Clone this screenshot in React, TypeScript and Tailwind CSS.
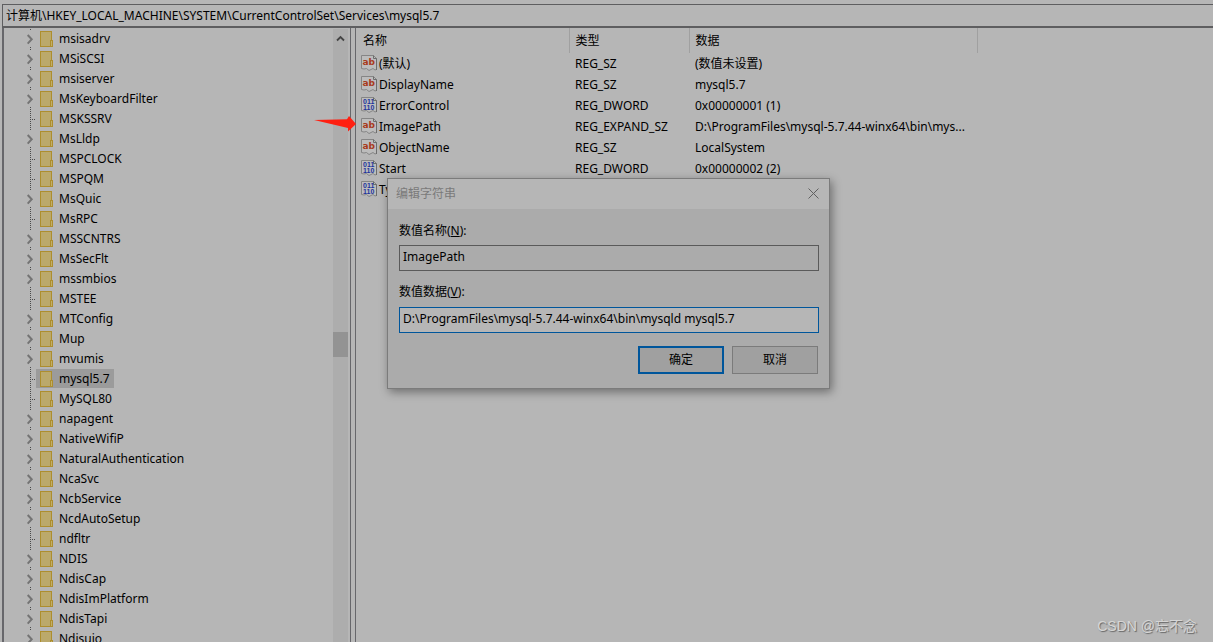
import { useState } from 'react';
import clsx from 'clsx';

type ValueKind = 'string' | 'binary';

interface RegistryValue {
  name: string;
  kind: ValueKind;
  type: string;
  data: string;
}

interface RegistryKey {
  name: string;
  leaf?: boolean;
}

const keys: RegistryKey[] = [
  { name: 'msisadrv' },
  { name: 'MSiSCSI' },
  { name: 'msiserver' },
  { name: 'MsKeyboardFilter' },
  { name: 'MSKSSRV', leaf: true },
  { name: 'MsLldp' },
  { name: 'MSPCLOCK', leaf: true },
  { name: 'MSPQM', leaf: true },
  { name: 'MsQuic' },
  { name: 'MsRPC', leaf: true },
  { name: 'MSSCNTRS' },
  { name: 'MsSecFlt' },
  { name: 'mssmbios' },
  { name: 'MSTEE', leaf: true },
  { name: 'MTConfig' },
  { name: 'Mup' },
  { name: 'mvumis' },
  { name: 'mysql5.7', leaf: true },
  { name: 'MySQL80', leaf: true },
  { name: 'napagent' },
  { name: 'NativeWifiP' },
  { name: 'NaturalAuthentication' },
  { name: 'NcaSvc' },
  { name: 'NcbService' },
  { name: 'NcdAutoSetup' },
  { name: 'ndfltr', leaf: true },
  { name: 'NDIS' },
  { name: 'NdisCap' },
  { name: 'NdisImPlatform' },
  { name: 'NdisTapi' },
  { name: 'Ndisuio' },
];

const values: RegistryValue[] = [
  { name: '(默认)', kind: 'string', type: 'REG_SZ', data: '(数值未设置)' },
  { name: 'DisplayName', kind: 'string', type: 'REG_SZ', data: 'mysql5.7' },
  { name: 'ErrorControl', kind: 'binary', type: 'REG_DWORD', data: '0x00000001 (1)' },
  { name: 'ImagePath', kind: 'string', type: 'REG_EXPAND_SZ', data: 'D:\\ProgramFiles\\mysql-5.7.44-winx64\\bin\\mys...' },
  { name: 'ObjectName', kind: 'string', type: 'REG_SZ', data: 'LocalSystem' },
  { name: 'Start', kind: 'binary', type: 'REG_DWORD', data: '0x00000002 (2)' },
  { name: 'Type', kind: 'binary', type: '', data: '' },
];

function Branch({ leaf }: { leaf?: boolean }) {
  return (
    <svg width="12" height="20" viewBox="0 0 12 20" className="shrink-0" shapeRendering="crispEdges" stroke="#4a4a4a">
      {leaf ? (
        <>
          <path d="M6.5 1V20" strokeDasharray="1 1" />
          <path d="M6 11.5H13" strokeDasharray="1 1" />
        </>
      ) : (
        <>
          <path d="M6.5 1V2M6.5 19V20" />
          <path d="M3.7 7L7.7 11.3L3.7 15.6" fill="none" stroke="#747474" strokeWidth="2" shapeRendering="auto" />
        </>
      )}
    </svg>
  );
}

function FolderIcon() {
  return (
    <svg width="13" height="16" viewBox="0 0 13 16" className="shrink-0" shapeRendering="crispEdges">
      <rect x="0.5" y="0.5" width="11" height="15" fill="#bba96b" stroke="#ad8e2e" />
      <rect x="10.5" y="9.5" width="2" height="6" fill="#c2ae68" stroke="#ad8e2e" />
    </svg>
  );
}

function ValueIcon({ kind }: { kind: ValueKind }) {
  return (
    <svg width="16" height="16" viewBox="0 0 16 16" className="mb-0.5 shrink-0" aria-hidden="true">
      <path d="M0.5 0.5H12.5L15.5 3.5V14.5L14 15L12 13.5L10 14.5L8 15.5L5.5 13.5L3 14L0.5 13.5Z" fill="#bcbcbc" stroke="#858585" />
      <path d="M12.5 0.5V3.5H15.5V15" fill="none" stroke="#6d6d6d" />
      {kind === 'string' ? (
        <text x="1.5" y="10" className="fill-[#a83a1c] font-['DejaVu_Sans'] text-[9px] font-bold">ab</text>
      ) : (
        <>
          <text x="2" y="7" className="fill-[#1c349c] font-['Liberation_Sans'] text-[7px] font-bold">011</text>
          <text x="2" y="13" className="fill-[#1c349c] font-['Liberation_Sans'] text-[7px] font-bold">110</text>
        </>
      )}
    </svg>
  );
}

function KeyTree() {
  const [selected, setSelected] = useState('mysql5.7');

  return (
    <aside className="flex w-[349px] shrink-0 border-r border-l-2 border-[#67676b]">
      <ul className="min-w-0 flex-1 overflow-hidden pl-5">
        {keys.map((key) => (
          <li key={key.name} className="flex h-5">
            <Branch leaf={key.leaf} />
            <button
              type="button"
              onClick={() => setSelected(key.name)}
              className={clsx(
                'mt-px flex items-center gap-1.5 px-1 leading-4 whitespace-nowrap',
                selected === key.name && 'bg-[#9b9b9b]'
              )}
            >
              <FolderIcon />
              {key.name}
            </button>
          </li>
        ))}
      </ul>
      <div className="mt-px mr-0.5 flex w-[15px] flex-col bg-[#adadad]">
        <svg width="15" height="18" viewBox="0 0 15 18" fill="none" stroke="#444444" strokeWidth="1.8">
          <path d="M4 11.5L7.5 8L11 11.5" />
        </svg>
        <div className="mt-[285px] h-[25px] bg-[#939393]" />
      </div>
    </aside>
  );
}

function ValueTable() {
  return (
    <main className="ml-1 min-w-0 flex-1 border-l border-[#67676b]">
      <table className="w-full table-fixed text-left">
        <colgroup>
          <col className="w-[213px]" />
          <col className="w-[120px]" />
          <col className="w-[288px]" />
          <col />
        </colgroup>
        <thead>
          <tr className="h-[25px]">
            {['名称', '类型', '数据', ''].map((title, index) => (
              <th
                key={index}
                className={clsx('p-0 pt-px font-normal', index === 0 ? 'pl-[7px]' : 'pl-1.5', index < 3 && 'border-r border-[#a0a0a0]')}
              >
                {title}
              </th>
            ))}
          </tr>
        </thead>
        <tbody>
          {values.map((value) => (
            <tr key={value.name} className="h-[21px]">
              <td className="relative p-0 pl-[5px]">
                {value.name === 'ImagePath' && (
                  <svg width="42" height="16" viewBox="0 0 42 16" className="absolute top-0 right-full" fill="#ff2012">
                    <path d="M0 4L33 3.2L35 0L42 8L34 15.5L34 12Z" />
                  </svg>
                )}
                <div className="flex items-center gap-0.5">
                  <ValueIcon kind={value.kind} />
                  {value.name}
                </div>
              </td>
              <td className="p-0 pl-1.5">{value.type}</td>
              <td className="p-0 pl-1.5 whitespace-nowrap">{value.data}</td>
              <td />
            </tr>
          ))}
        </tbody>
      </table>
    </main>
  );
}

function EditStringDialog() {
  const [data, setData] = useState('D:\\ProgramFiles\\mysql-5.7.44-winx64\\bin\\mysqld mysql5.7');

  return (
    <div
      role="dialog"
      aria-labelledby="dialog-title"
      className="absolute top-[178px] left-[387px] w-[443px] border border-[#7b7b7b] bg-[#ababab] pb-3.5 shadow-[2px_3px_9px_rgba(0,0,0,0.4)]"
    >
      <header className="flex h-[30px] items-center justify-between bg-[#b6b6b6] pr-2.5 pl-2">
        <h2 id="dialog-title" className="text-[#7a7a7a]">编辑字符串</h2>
        <button type="button" aria-label="关闭" className="pb-0.5">
          <svg width="11" height="11" viewBox="0 0 11 11" stroke="#606060">
            <path d="M0.5 0.5L10.5 10.5M10.5 0.5L0.5 10.5" />
          </svg>
        </button>
      </header>
      <form className="pt-3 pr-2.5 pl-[11px]" onSubmit={(event) => event.preventDefault()}>
        <label htmlFor="value-name" className="block h-6 leading-5">
          数值名称(<u>N</u>):
        </label>
        <input
          id="value-name"
          readOnly
          value="ImagePath"
          className="block h-[26px] w-full border border-[#5a5a5a] bg-[#ababab] px-[3px] pb-1 outline-none"
        />
        <label htmlFor="value-data" className="mt-[11px] block h-[25px] leading-5">
          数值数据(<u>V</u>):
        </label>
        <input
          id="value-data"
          value={data}
          onChange={(event) => setData(event.target.value)}
          className="block h-[26px] w-full border border-[#00569b] bg-[#b6b6b6] px-[3px] pb-1 outline-none"
        />
        <div className="mt-[13px] flex justify-end gap-2 pr-px">
          <button type="submit" className="h-7 w-[86px] border-2 border-[#00569b] bg-[#a0a0a0]">确定</button>
          <button type="button" className="h-7 w-[86px] border border-[#7b7b7b] bg-[#a0a0a0]">取消</button>
        </div>
      </form>
    </div>
  );
}

export default function App() {
  return (
    <div className="relative flex h-screen flex-col overflow-hidden bg-[#b6b6b6] pl-0.5 font-['Noto_Sans','Noto_Sans_CJK_SC',sans-serif] text-[12px] leading-5 text-black">
      <input
        aria-label="地址"
        readOnly
        value={'计算机\\HKEY_LOCAL_MACHINE\\SYSTEM\\CurrentControlSet\\Services\\mysql5.7'}
        className="mt-1 h-6 shrink-0 border border-r-0 border-b-2 border-[#5e5e60] px-[3px] pb-0.5 outline-none"
      />
      <div className="flex min-h-0 flex-1">
        <KeyTree />
        <ValueTable />
      </div>
      <EditStringDialog />
      <p className="absolute right-4 bottom-1.5 font-['Liberation_Sans','Noto_Sans_CJK_SC',sans-serif] text-[14px] text-[#d6d6d6] [text-shadow:1px_1px_1px_#666]">
        CSDN @忘不念
      </p>
    </div>
  );
}
